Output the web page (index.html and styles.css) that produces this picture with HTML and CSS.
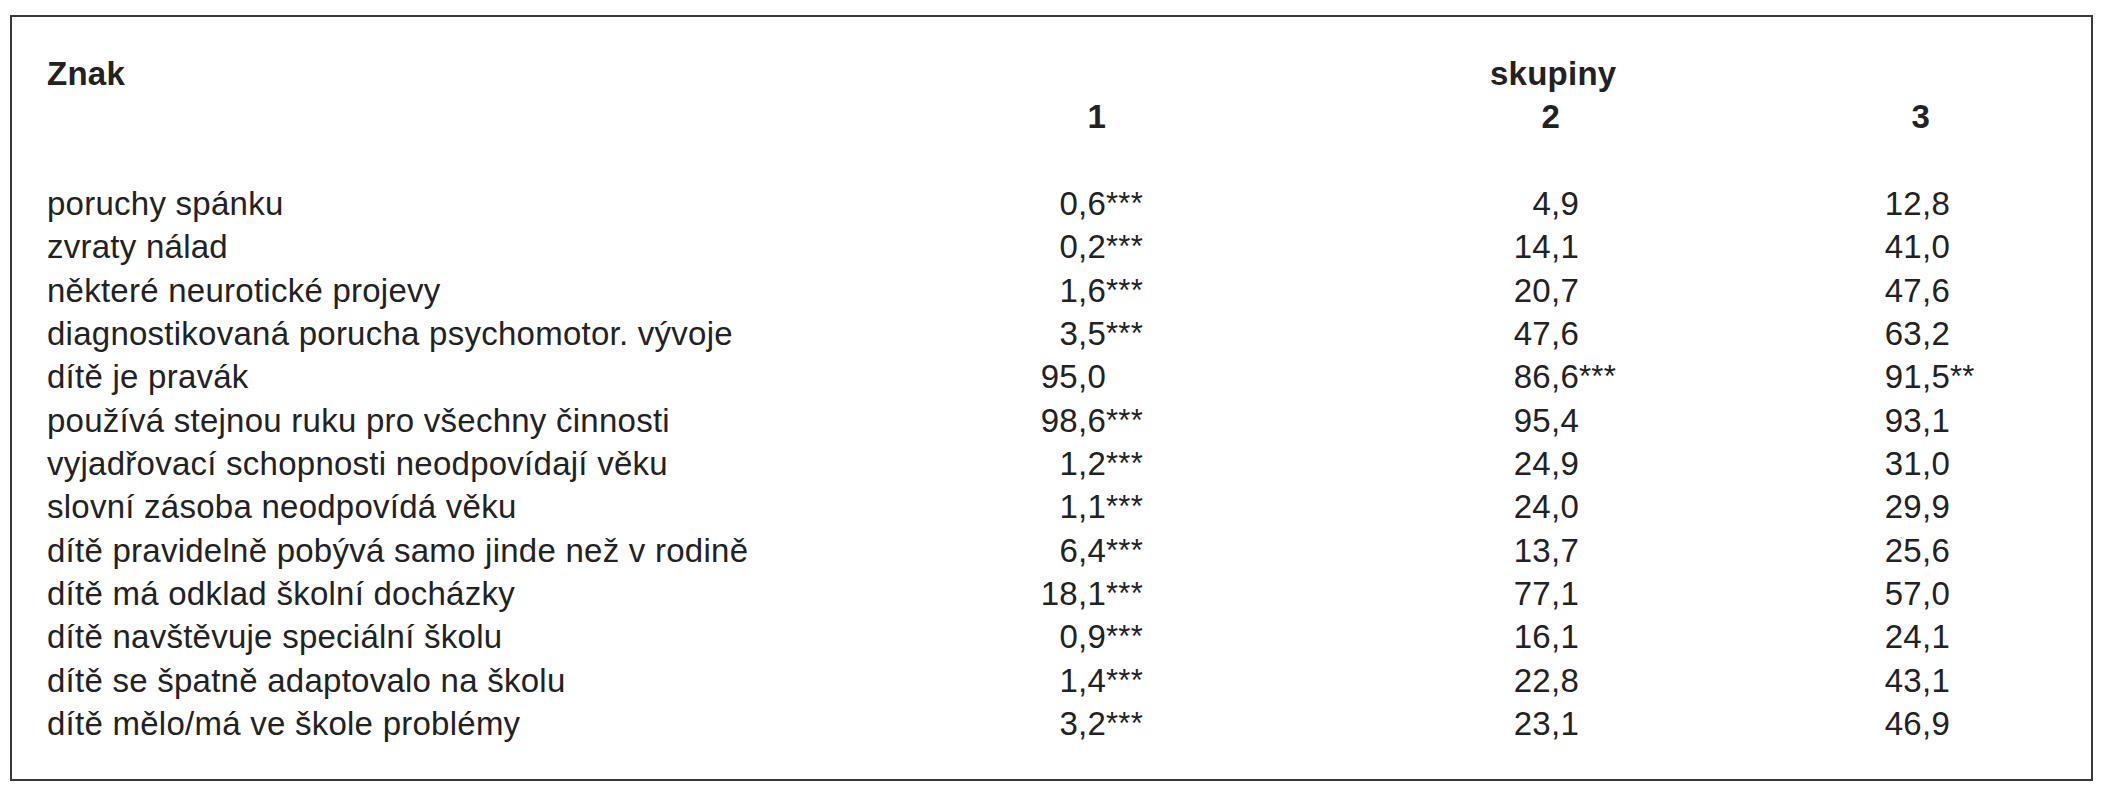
FILE: index.html
```html
<!DOCTYPE html>
<html lang="cs">
<head>
<meta charset="utf-8">
<title>Znak – skupiny</title>
<link rel="stylesheet" href="styles.css">
</head>
<body>
<div class="frame">
  <div class="row head">
    <span class="lbl">Znak</span>
    <span class="group">skupiny</span>
  </div>
  <div class="row head">
    <span class="lbl"></span>
    <span class="num h1">1</span>
    <span class="sig"></span>
    <span class="num h2">2</span>
    <span class="sig"></span>
    <span class="num h3">3</span>
  </div>
  <div class="row spacer"></div>

  <div class="row"><span class="lbl">poruchy spánku</span><span class="num">0,6</span><span class="sig">***</span><span class="num">4,9</span><span class="sig"></span><span class="num">12,8</span><span class="sig"></span></div>
  <div class="row"><span class="lbl">zvraty nálad</span><span class="num">0,2</span><span class="sig">***</span><span class="num">14,1</span><span class="sig"></span><span class="num">41,0</span><span class="sig"></span></div>
  <div class="row"><span class="lbl">některé neurotické projevy</span><span class="num">1,6</span><span class="sig">***</span><span class="num">20,7</span><span class="sig"></span><span class="num">47,6</span><span class="sig"></span></div>
  <div class="row"><span class="lbl">diagnostikovaná porucha psychomotor. vývoje</span><span class="num">3,5</span><span class="sig">***</span><span class="num">47,6</span><span class="sig"></span><span class="num">63,2</span><span class="sig"></span></div>
  <div class="row"><span class="lbl">dítě je pravák</span><span class="num">95,0</span><span class="sig"></span><span class="num">86,6</span><span class="sig">***</span><span class="num">91,5</span><span class="sig">**</span></div>
  <div class="row"><span class="lbl">používá stejnou ruku pro všechny činnosti</span><span class="num">98,6</span><span class="sig">***</span><span class="num">95,4</span><span class="sig"></span><span class="num">93,1</span><span class="sig"></span></div>
  <div class="row"><span class="lbl">vyjadřovací schopnosti neodpovídají věku</span><span class="num">1,2</span><span class="sig">***</span><span class="num">24,9</span><span class="sig"></span><span class="num">31,0</span><span class="sig"></span></div>
  <div class="row"><span class="lbl">slovní zásoba neodpovídá věku</span><span class="num">1,1</span><span class="sig">***</span><span class="num">24,0</span><span class="sig"></span><span class="num">29,9</span><span class="sig"></span></div>
  <div class="row"><span class="lbl">dítě pravidelně pobývá samo jinde než v rodině</span><span class="num">6,4</span><span class="sig">***</span><span class="num">13,7</span><span class="sig"></span><span class="num">25,6</span><span class="sig"></span></div>
  <div class="row"><span class="lbl">dítě má odklad školní docházky</span><span class="num">18,1</span><span class="sig">***</span><span class="num">77,1</span><span class="sig"></span><span class="num">57,0</span><span class="sig"></span></div>
  <div class="row"><span class="lbl">dítě navštěvuje speciální školu</span><span class="num">0,9</span><span class="sig">***</span><span class="num">16,1</span><span class="sig"></span><span class="num">24,1</span><span class="sig"></span></div>
  <div class="row"><span class="lbl">dítě se špatně adaptovalo na školu</span><span class="num">1,4</span><span class="sig">***</span><span class="num">22,8</span><span class="sig"></span><span class="num">43,1</span><span class="sig"></span></div>
  <div class="row"><span class="lbl">dítě mělo/má ve škole problémy</span><span class="num">3,2</span><span class="sig">***</span><span class="num">23,1</span><span class="sig"></span><span class="num">46,9</span><span class="sig"></span></div>
</div>
</body>
</html>
```

FILE: styles.css
```css
html, body {
  margin: 0;
  padding: 0;
  background: #ffffff;
}

body {
  font-family: "Liberation Sans", Arial, sans-serif;
  font-size: 33px;
  letter-spacing: 0.25px;
  color: #222222;
}

.frame {
  margin: 15px 10px 0 10px;
  border: 2px solid #3a3a3a;
  padding: 35px 0 34px 35px;
}

.row {
  display: grid;
  grid-template-columns: 959px 100px 373px 100px 271px 100px 1fr;
  height: 43.33px;
  line-height: 43.33px;
  white-space: nowrap;
}

.head {
  font-weight: bold;
}

.lbl {
  grid-column: 1;
}

.num {
  text-align: right;
}

.sig {
  text-align: left;
  font-size: 31px;
}

.group {
  grid-column: 4 / 6;
  padding-left: 11px;
}

.h1 {
  padding-right: 0;
}

.h2 {
  padding-right: 19px;
}

.h3 {
  padding-right: 20px;
}
```
